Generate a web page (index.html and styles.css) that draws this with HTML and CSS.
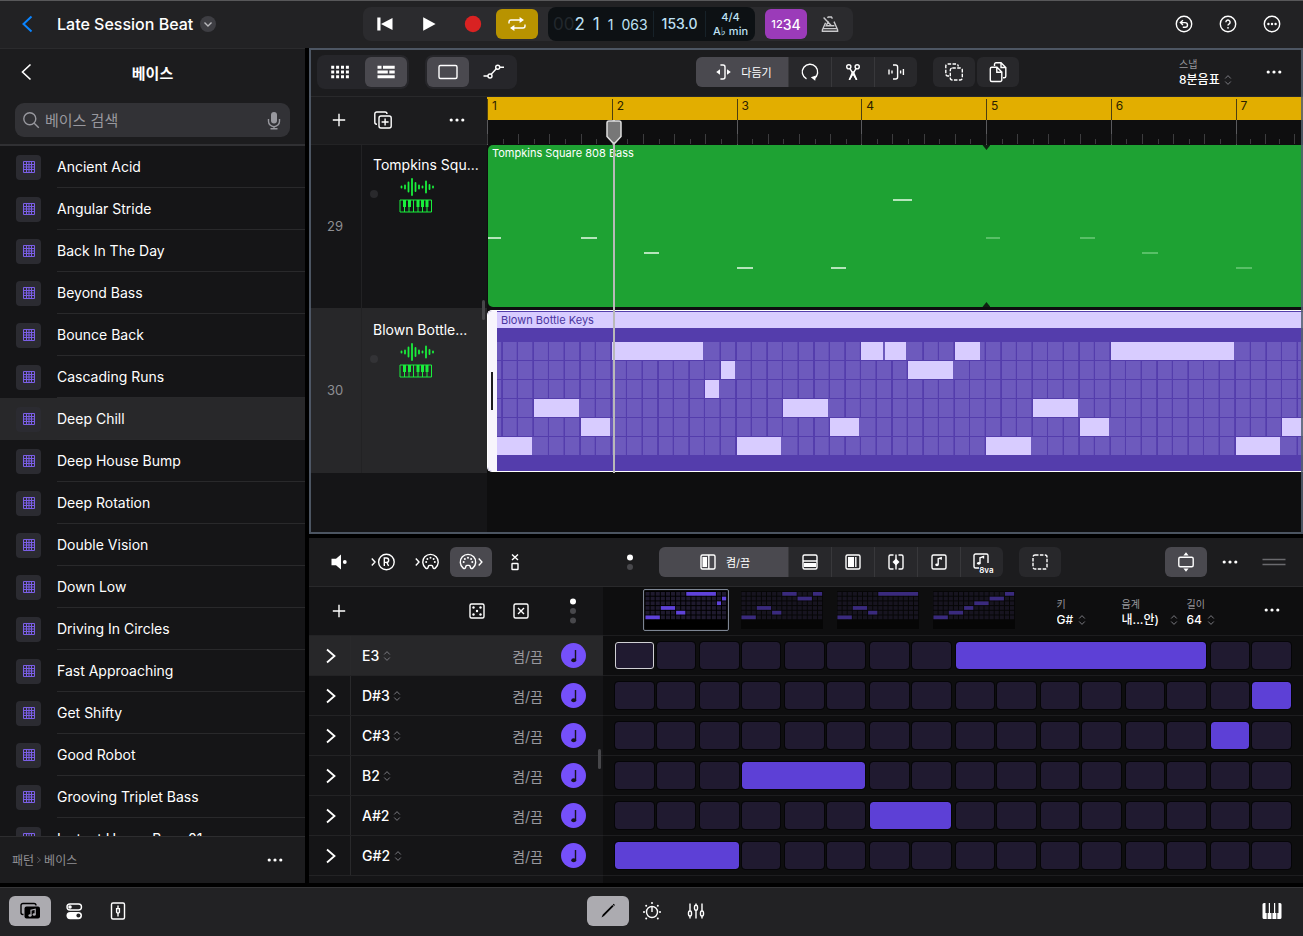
FILE: index.html
```html
<!DOCTYPE html>
<html lang="ko">
<head>
    <meta charset="UTF-8">
    <meta name="viewport" content="width=device-width, initial-scale=1.0">
    <title>Late Session Beat</title>
    <link rel="stylesheet" href="styles.css">
</head>
<body>
    <!-- icon set, all drawn on a 24px box -->
    <svg class="defs" aria-hidden="true">
        <symbol id="i-back" viewBox="0 0 24 24"><path d="M15.5 4.5L7.5 12l8 7.5"/></symbol>
        <symbol id="i-next" viewBox="0 0 24 24"><path d="M8 5.5l7.5 6.5L8 18.5"/></symbol>
        <symbol id="i-plus" viewBox="0 0 24 24"><path d="M12 5.8v12.4M5.8 12h12.4"/></symbol>
        <symbol id="i-dots" viewBox="0 0 24 24"><g class="fill"><circle cx="6.2" cy="12" r="1.6"/><circle cx="12" cy="12" r="1.6"/><circle cx="17.8" cy="12" r="1.6"/></g></symbol>
        <symbol id="i-updown" viewBox="0 0 8 12"><path d="M1.2 4.5L4 1.6l2.8 2.9M1.2 7.5L4 10.4l2.8-2.9"/></symbol>
        <symbol id="i-prev" viewBox="0 0 24 24"><path class="fill" d="M4.3 5.6h3.2v12.8H4.3zM19.5 5.9v12.2L8 12z"/></symbol>
        <symbol id="i-play" viewBox="0 0 24 24"><path class="fill" d="M6.2 5.2v13.6L18.6 12z"/></symbol>
        <symbol id="i-rec" viewBox="0 0 24 24"><circle class="rec" cx="12" cy="12" r="8.2"/></symbol>
        <symbol id="i-cycle" viewBox="0 0 24 24"><path d="M4 11.6V10a2 2 0 0 1 2-2h9M20 12.4V14a2 2 0 0 1-2 2H9"/><path class="fill" d="M14.6 4.9L19 8l-4.4 3.1zM9.4 12.9L5 16l4.4 3.1z"/></symbol>
        <symbol id="i-metro" viewBox="0 0 24 24"><path d="M9.6 6l.6-1h3.2l1 1.6M16 9.600l3.600 8.200v1.400H4.400v-1.400l3.200-7M4.600 16.600h14.800M13.400 13.800L5.600 5.400M10.400 9.200l-2.200 4.600h8.200"/></symbol>
        <symbol id="i-undo" viewBox="0 0 24 24"><circle cx="12" cy="12" r="7.7"/><path d="M11 8.200L8.400 10.600 11 13M8.600 10.600h4.600a2.300 2.300 0 0 1 0 4.600h-2.400"/></symbol>
        <symbol id="i-help" viewBox="0 0 24 24"><circle cx="12" cy="12" r="7.7"/><path d="M9.9 10.200a2.100 2.100 0 1 1 3.300 1.700c-.8.5-1.200.8-1.200 1.700"/><circle class="fill" cx="12" cy="15.8" r=".9"/></symbol>
        <symbol id="i-more" viewBox="0 0 24 24"><circle cx="12" cy="12" r="7.7"/><g class="fill"><circle cx="8.400" cy="12" r="1.200"/><circle cx="12" cy="12" r="1.200"/><circle cx="15.600" cy="12" r="1.200"/></g></symbol>
        <symbol id="i-search" viewBox="0 0 24 24"><circle cx="10.8" cy="10.8" r="6"/><path d="M15.2 15.2l4.600 4.600"/></symbol>
        <symbol id="i-mic" viewBox="0 0 24 24"><rect class="fill" x="9" y="4" width="6" height="11.5" rx="3"/><path d="M6.500 11v2.200a5.500 5.500 0 0 0 11 0V11M12 18.700v2M8.500 20.700h7"/></symbol>
        <symbol id="i-grid" viewBox="0 0 24 24"><path class="dash" d="M3.200 7.200h18M3.200 12h18M3.200 16.800h18"/></symbol>
        <symbol id="i-rows" viewBox="0 0 24 24"><path class="bars" d="M3.500 7.300h4M9 7.300h11.700M3.500 12h10.300M15.300 12h5.400M3.500 16.700h17.200"/></symbol>
        <symbol id="i-rect" viewBox="0 0 24 24"><rect x="3" y="5.500" width="18" height="13" rx="1.500"/></symbol>
        <symbol id="i-auto" viewBox="0 0 24 24"><path d="M1.500 16h4.500M9 14.500l5.500-6M17.600 7.200h4.400"/><circle cx="8" cy="16" r="2"/><circle cx="15.700" cy="7.200" r="2"/></symbol>
        <symbol id="i-trim" viewBox="0 0 24 24"><path d="M9.400 5H12a2 2 0 0 1 2 2v10a2 2 0 0 1-2 2H9.400"/><path class="fill" d="M9 9.300v5.400L5.200 12zM16 9.300v5.400l3.800-2.700z"/></symbol>
        <symbol id="i-loop" viewBox="0 0 24 24"><path d="M8.500 18.800a7.700 7.700 0 1 1 7.500-.300"/><path class="fill" d="M12.800 17.200l5.200-1.800-.800 5.400z"/></symbol>
        <symbol id="i-cut" viewBox="0 0 24 24"><circle cx="7.800" cy="6.800" r="2.100"/><circle cx="16.200" cy="6.800" r="2.100"/><path d="M9 8.600l6.600 11M15 8.600l-6.600 11"/><path class="fill" d="M11 12.500l3.800 7.500h1.600l-3.600-9zM13 12.500L9.200 20H7.600l3.600-9z"/></symbol>
        <symbol id="i-stretch" viewBox="0 0 24 24"><path d="M9 5h2.600a2 2 0 0 1 2 2v10a2 2 0 0 1-2 2H9M5 9.500v5M8 10.500v3M16.600 10.500v3M19.400 9v6"/></symbol>
        <symbol id="i-multi" viewBox="0 0 24 24"><path class="dashed" d="M7 16H5.800a2 2 0 0 1-2-2V6a2 2 0 0 1 2-2h8.400a2 2 0 0 1 2 2v.500"/><rect class="dashed" x="8.300" y="8" width="12" height="12" rx="2"/></symbol>
        <symbol id="i-copy" viewBox="0 0 24 24"><path d="M8.500 6V4.200A1.500 1.500 0 0 1 10 2.700h5l4.800 4.800v8.700a1.500 1.500 0 0 1-1.500 1.500H17M15 2.700v4.800h4.800"/><path d="M4.300 8.800a1.500 1.500 0 0 1 1.500-1.500H11l4.800 4.800V20a1.500 1.500 0 0 1-1.500 1.500H5.800A1.500 1.500 0 0 1 4.300 20zM10.800 7.300v5h5"/></symbol>
        <symbol id="i-dup" viewBox="0 0 24 24"><rect x="8" y="8" width="12.200" height="12" rx="2"/><path d="M6 16.200h-.200a2 2 0 0 1-2-2V6a2 2 0 0 1 2-2H14a2 2 0 0 1 2 2M14.100 10.500v7M10.600 14h7"/></symbol>
        <symbol id="i-wave" viewBox="0 0 36 18"><path d="M2.500 8.500v1M6 7.500v3M9.500 4.500v9M13 1v16M16.500 5v8M20 7.500v3M23.500 8.500v1M27 3.500v11M30.500 7v4M34 8.500v1"/></symbol>
        <symbol id="i-keys" viewBox="0 0 34 14"><path d="M1 1h31.500v12H1zM5.500 7v6M10 7v6M14.500 1v12M19 7v6M23.500 7v6M28 7v6"/><path class="fill" d="M4 1h3v7H4zM9 1h3v7H9zM17.500 1h3v7h-3zM22 1h3v7h-3zM26.500 1h3v7h-3z"/></symbol>
        <symbol id="i-mute" viewBox="0 0 24 24"><path class="fill" d="M4.500 8.800H9l5-4.300v15l-5-4.300H4.500z"/><circle class="fill" cx="17.800" cy="12" r="1.900"/></symbol>
        <symbol id="i-rin" viewBox="0 0 24 24"><path d="M.800 8.500L4 12 .800 15.500M13.300 16V8h2.200a2.200 2.200 0 0 1 0 4.400h-2.200M15.800 12.400l1.800 3.600"/><circle cx="15.400" cy="12" r="7.800"/></symbol>
        <symbol id="i-midi" viewBox="0 0 18 18"><path d="M4.200 15.100a7.700 7.700 0 1 1 9.600 0c-1 .800-2 .500-2.300-.500l-.400-1.300a1.300 1.300 0 0 0-1.200-.900H8.100a1.300 1.300 0 0 0-1.200.900l-.400 1.300c-.300 1-1.300 1.300-2.300.5z"/><g class="fill"><circle cx="4.700" cy="9" r="1"/><circle cx="5.900" cy="6" r="1"/><circle cx="9" cy="4.700" r="1"/><circle cx="12.100" cy="6" r="1"/><circle cx="13.300" cy="9" r="1"/></g></symbol>
        <symbol id="i-midi-in" viewBox="0 0 24 24"><path d="M.800 8.500L4 12 .800 15.500"/><use href="#i-midi" x="6.500" y="3" width="18" height="18"/></symbol>
        <symbol id="i-midi-out" viewBox="0 0 24 24"><path d="M19.700 8.500l3.200 3.500-3.200 3.500"/><use href="#i-midi" x="0" y="3" width="18" height="18"/></symbol>
        <symbol id="i-xbox" viewBox="0 0 24 24"><path d="M9 4.500l6 5.500M15 4.500L9 10"/><rect x="9" y="13.500" width="6" height="6" rx=".500"/></symbol>
        <symbol id="i-two" viewBox="0 0 24 24"><circle class="fill" cx="12" cy="7.500" r="3"/><circle class="dim" cx="12" cy="17" r="3"/></symbol>
        <symbol id="i-three" viewBox="0 0 24 30"><circle class="fill" cx="12" cy="5.500" r="3"/><circle class="dim" cx="12" cy="15" r="3"/><circle class="dim" cx="12" cy="24.500" r="3"/></symbol>
        <symbol id="i-onoff" viewBox="0 0 24 24"><rect x="5" y="5" width="14" height="14" rx="1.500"/><path d="M12.800 5v14"/><rect class="fill" x="6.500" y="7" width="4.500" height="10"/></symbol>
        <symbol id="i-vel" viewBox="0 0 24 24"><rect x="5" y="5" width="14" height="14" rx="1.500"/><path d="M5 11h14"/><rect class="fill" x="6" y="13" width="12" height="4"/></symbol>
        <symbol id="i-gate" viewBox="0 0 24 24"><rect x="5" y="5" width="14" height="14" rx="1.500"/><path d="M14.800 7v10"/><rect class="fill" x="7" y="7" width="6" height="10"/></symbol>
        <symbol id="i-offset" viewBox="0 0 24 24"><path d="M9.500 5h-3A1.500 1.500 0 0 0 5 6.500v11A1.500 1.500 0 0 0 6.500 19h3M14.500 5h3A1.500 1.500 0 0 1 19 6.500v11a1.500 1.500 0 0 1-1.500 1.500h-3M12 4.500v15"/><path class="fill" d="M12 8.500l3.500 3.500-3.500 3.500L8.500 12z"/></symbol>
        <symbol id="i-notebox" viewBox="0 0 24 24"><rect x="5" y="5" width="14" height="14" rx="1.500"/><path d="M11.200 14.500V8.800l3-1v2"/><ellipse class="fill" cx="10" cy="14.800" rx="1.800" ry="1.400"/></symbol>
        <symbol id="i-octave" viewBox="0 0 24 24"><path d="M10 18H5.500A1.500 1.500 0 0 1 4 16.500v-11A1.500 1.500 0 0 1 5.500 4h11A1.500 1.500 0 0 1 18 5.500V13M10 13V7.800l3.500-1.200v2"/><ellipse class="fill" cx="8.800" cy="13.300" rx="1.800" ry="1.400"/></symbol>
        <symbol id="i-marquee" viewBox="0 0 24 24"><rect class="dashed" x="5" y="5" width="14" height="14" rx="2"/></symbol>
        <symbol id="i-height" viewBox="0 0 24 24"><rect x="4.800" y="7.300" width="14.400" height="9.400" rx="1.500"/><path class="fill" d="M12 2.200l2.600 3.300H9.400zM12 21.800l2.600-3.300H9.400z"/></symbol>
        <symbol id="i-grip" viewBox="0 0 24 24"><path d="M.500 9.500h23M.500 14.500h23"/></symbol>
        <symbol id="i-dice" viewBox="0 0 24 24"><rect x="5" y="5" width="14" height="14" rx="1.500"/><g class="fill"><circle cx="8.500" cy="8.500" r="1.200"/><circle cx="15.500" cy="8.500" r="1.200"/><circle cx="12" cy="12" r="1.200"/><circle cx="8.500" cy="15.500" r="1.200"/><circle cx="15.500" cy="15.500" r="1.200"/></g></symbol>
        <symbol id="i-clear" viewBox="0 0 24 24"><rect x="5" y="5" width="14" height="14" rx="1.500"/><path d="M9 9l6 6M15 9l-6 6"/></symbol>
        <symbol id="i-quarter" viewBox="0 0 24 24"><path d="M13.500 6v10"/><ellipse class="fill" cx="11.700" cy="16.200" rx="2.500" ry="2"/></symbol>
        <symbol id="i-pattern" viewBox="0 0 12 12"><path d="M.500.500h11v11H.500zM.500 3.500h11M.500 6h11M.500 8.500h11M3.500.500v11M6 .500v11M8.500.500v11"/></symbol>
        <symbol id="i-browser" viewBox="0 0 24 24"><path d="M5.500 15.500H5a2 2 0 0 1-2-2v-7a2 2 0 0 1 2-2h11a2 2 0 0 1 2 2"/><rect class="fill" x="6.500" y="7.500" width="15.500" height="12" rx="2"/><path class="cut" d="M13 16.500v-5.300l4.200-1v5"/><ellipse class="cutfill" cx="12" cy="16.500" rx="1.600" ry="1.200"/><ellipse class="cutfill" cx="16.200" cy="15.500" rx="1.600" ry="1.200"/></symbol>
        <symbol id="i-switch" viewBox="0 0 24 24"><rect x="5" y="5" width="14.500" height="6" rx="3"/><circle class="fill" cx="8" cy="8" r="1.800"/><rect class="fill" x="4.500" y="13" width="15.500" height="7.200" rx="3.600"/><circle class="cutdark" cx="16.400" cy="16.600" r="2"/></symbol>
        <symbol id="i-strip" viewBox="0 0 24 24"><rect x="5.500" y="4" width="13" height="16" rx="1.500"/><path d="M12 6.500v2.500M12 14.500v3M10.600 9.600h2.800v3.600L12 14.500l-1.400-1.300z"/></symbol>
        <symbol id="i-pencil" viewBox="0 0 24 24"><path class="fill" d="M5.500 18.500l1.300-3L16.300 6l1.300 1.300-9.600 9.600zM16.800 5.500l.900-.700 1.200 1.200-.800.900z"/></symbol>
        <symbol id="i-knob" viewBox="0 0 24 24"><circle cx="12" cy="13" r="5.500"/><path d="M12 8v5"/><g class="fill"><circle cx="4" cy="13" r="1"/><circle cx="20" cy="13" r="1"/><circle cx="6.200" cy="6.800" r="1"/><circle cx="17.800" cy="6.800" r="1"/><circle cx="12" cy="4" r="1"/><circle cx="6.200" cy="19.500" r="1"/><circle cx="17.800" cy="19.500" r="1"/></g></symbol>
        <symbol id="i-mixer" viewBox="0 0 24 24"><path d="M6 4.500V12M6 17v2.500M12 4.500v2M12 11v8.500M18 4.500V12M18 17v2.500"/><rect x="4.500" y="12" width="3" height="5" rx="1.500"/><rect x="10.500" y="6.300" width="3" height="5" rx="1.500"/><rect x="16.500" y="12" width="3" height="5" rx="1.500"/></symbol>
        <symbol id="i-piano" viewBox="0 0 24 24"><path class="fill" d="M2.500 5.500A1.500 1.500 0 0 1 4 4h1.500v10h1.200v6H4a1.500 1.500 0 0 1-1.500-1.500zM7.600 20v-6h1.200V4h1.200v10h1.500v6zM12.400 20v-6H14V4h1.200v10h1.200v6zM17.300 20v-6h1.200V4H20a1.500 1.500 0 0 1 1.500 1.500v13A1.500 1.500 0 0 1 20 20z"/></symbol>
    </svg>

    <div class="app">
        <header class="topbar">
            <div class="project">
                <button class="back" aria-label="뒤로"><svg><use href="#i-back"/></svg></button>
                <h1>Late Session Beat</h1>
                <button class="title-menu" aria-label="프로젝트 메뉴"><svg viewBox="0 0 16 16"><path d="M4.500 6.500L8 10l3.500-3.500"/></svg></button>
            </div>
            <div class="transport">
                <button class="btn" aria-label="처음으로"><svg><use href="#i-prev"/></svg></button>
                <button class="btn" aria-label="재생"><svg><use href="#i-play"/></svg></button>
                <button class="btn" aria-label="녹음"><svg><use href="#i-rec"/></svg></button>
                <button class="btn cycle" aria-label="사이클"><svg><use href="#i-cycle"/></svg></button>
                <div class="lcd">
                    <div class="position"><span class="big"><span class="ghost">00</span>2</span><span class="big">1</span><span>1</span><span>063</span></div>
                    <div class="tempo">153.0</div>
                    <div class="meter"><span>4/4</span><span>A♭ min</span></div>
                </div>
                <button class="btn countin" aria-label="카운트 인"><small>12</small>34</button>
                <button class="btn grey" aria-label="메트로놈"><svg><use href="#i-metro"/></svg></button>
            </div>
            <div class="tools">
                <button class="btn" aria-label="실행 취소"><svg><use href="#i-undo"/></svg></button>
                <button class="btn" aria-label="도움말"><svg><use href="#i-help"/></svg></button>
                <button class="btn" aria-label="더 보기"><svg><use href="#i-more"/></svg></button>
            </div>
        </header>

        <main class="main">
            <aside class="browser">
                <div class="browser-head">
                    <button class="btn" aria-label="뒤로"><svg><use href="#i-back"/></svg></button>
                    <h2>베이스</h2>
                </div>
                <label class="search">
                    <svg><use href="#i-search"/></svg>
                    <input type="text" placeholder="베이스 검색" aria-label="베이스 검색">
                    <svg><use href="#i-mic"/></svg>
                </label>
                <ul class="list" id="list"></ul>
                <nav class="path">
                    <a href="#">패턴</a><svg class="crumb"><use href="#i-next"/></svg><a href="#">베이스</a>
                    <button class="btn" aria-label="더 보기"><svg><use href="#i-dots"/></svg></button>
                </nav>
            </aside>

            <div class="panels">
                <section class="tracks">
                    <div class="toolbar">
                        <div class="group">
                            <button class="btn" aria-label="셀"><svg><use href="#i-grid"/></svg></button>
                            <button class="btn on" aria-label="트랙"><svg><use href="#i-rows"/></svg></button>
                        </div>
                        <div class="group">
                            <button class="btn on" aria-label="리전"><svg><use href="#i-rect"/></svg></button>
                            <button class="btn" aria-label="오토메이션"><svg><use href="#i-auto"/></svg></button>
                        </div>
                        <div class="center">
                            <div class="segments">
                                <button class="seg on trim"><svg><use href="#i-trim"/></svg>다듬기</button>
                                <button class="seg" aria-label="루프"><svg><use href="#i-loop"/></svg></button>
                                <button class="seg" aria-label="분할"><svg><use href="#i-cut"/></svg></button>
                                <button class="seg" aria-label="늘리기"><svg><use href="#i-stretch"/></svg></button>
                            </div>
                            <div class="pair">
                                <button class="btn box" aria-label="다중 선택"><svg><use href="#i-multi"/></svg></button>
                                <button class="btn box" aria-label="복사"><svg><use href="#i-copy"/></svg></button>
                            </div>
                        </div>
                        <div class="end">
                            <label class="field snap"><span>스냅</span><span class="pick"><select><option>8분음표</option></select><svg class="updown"><use href="#i-updown"/></svg></span></label>
                            <button class="btn" aria-label="더 보기"><svg><use href="#i-dots"/></svg></button>
                        </div>
                    </div>
                    <div class="arrange">
                        <div class="headers">
                            <div class="header-tools">
                                <button class="btn" aria-label="트랙 추가"><svg><use href="#i-plus"/></svg></button>
                                <button class="btn" aria-label="트랙 복제"><svg><use href="#i-dup"/></svg></button>
                                <button class="btn last" aria-label="더 보기"><svg><use href="#i-dots"/></svg></button>
                            </div>
                            <div class="track">
                                <div class="number">29</div>
                                <div class="info">
                                    <h3>Tompkins Squ...</h3>
                                    <div class="kind"><svg class="wave"><use href="#i-wave"/></svg><svg class="keys"><use href="#i-keys"/></svg></div>
                                </div>
                            </div>
                            <div class="track selected">
                                <div class="number">30</div>
                                <div class="info">
                                    <h3>Blown Bottle...</h3>
                                    <div class="kind"><svg class="wave"><use href="#i-wave"/></svg><svg class="keys"><use href="#i-keys"/></svg></div>
                                </div>
                            </div>
                            <i class="thumb"></i>
                        </div>
                        <div class="timeline">
                            <div class="ruler" id="ruler"></div>
                            <div class="lane"><div class="region green" id="green"><span class="name">Tompkins Square 808 Bass</span></div></div>
                            <div class="lane">
                                <div class="region purple">
                                    <span class="name">Blown Bottle Keys</span>
                                    <div class="roll" id="roll"></div>
                                </div>
                            </div>
                            <div class="playhead"><svg viewBox="0 0 16 24"><path d="M1 3a2 2 0 0 1 2-2h10a2 2 0 0 1 2 2v13.500l-6 6.500H7l-6-6.500z"/></svg></div>
                        </div>
                    </div>
                </section>

                <section class="editor">
                    <div class="toolbar">
                        <div class="loose">
                            <button class="btn" aria-label="소리 끔"><svg><use href="#i-mute"/></svg></button>
                            <button class="btn" aria-label="녹음 입력"><svg><use href="#i-rin"/></svg></button>
                            <button class="btn" aria-label="MIDI 입력"><svg><use href="#i-midi-in"/></svg></button>
                            <button class="btn on" aria-label="MIDI 출력"><svg><use href="#i-midi-out"/></svg></button>
                            <button class="btn" aria-label="자르기"><svg><use href="#i-xbox"/></svg></button>
                        </div>
                        <div class="center">
                            <button class="btn page" aria-label="페이지"><svg><use href="#i-two"/></svg></button>
                            <div class="segments">
                                <button class="seg on wide"><svg><use href="#i-onoff"/></svg>켬/끔</button>
                                <button class="seg" aria-label="벨로시티"><svg><use href="#i-vel"/></svg></button>
                                <button class="seg" aria-label="게이트"><svg><use href="#i-gate"/></svg></button>
                                <button class="seg" aria-label="오프셋"><svg><use href="#i-offset"/></svg></button>
                                <button class="seg" aria-label="음표"><svg><use href="#i-notebox"/></svg></button>
                                <button class="seg octave"><svg><use href="#i-octave"/></svg><span>8va</span></button>
                            </div>
                            <button class="btn box" aria-label="선택"><svg><use href="#i-marquee"/></svg></button>
                        </div>
                        <div class="end">
                            <button class="btn on" aria-label="높이"><svg><use href="#i-height"/></svg></button>
                            <button class="btn" aria-label="더 보기"><svg><use href="#i-dots"/></svg></button>
                            <button class="btn grip" aria-label="크기 조절"><svg><use href="#i-grip"/></svg></button>
                        </div>
                    </div>
                    <div class="sequencer">
                        <div class="seq-rows">
                            <div class="seq-tools">
                                <button class="btn" aria-label="행 추가"><svg><use href="#i-plus"/></svg></button>
                                <button class="btn last" aria-label="무작위"><svg><use href="#i-dice"/></svg></button>
                                <button class="btn" aria-label="지우기"><svg><use href="#i-clear"/></svg></button>
                                <button class="btn pager" aria-label="페이지"><svg><use href="#i-three"/></svg></button>
                            </div>
                            <div id="labels"></div>
                            <i class="thumb"></i>
                        </div>
                        <div class="seq-grid">
                            <div class="seq-head">
                                <div class="thumbs" id="thumbs"></div>
                                <div class="fields">
                                    <label class="field"><span>키</span><span class="pick"><select><option>G#</option></select><svg class="updown"><use href="#i-updown"/></svg></span></label>
                                    <label class="field scale"><span>음계</span><span class="pick"><select><option>내...안)</option></select><svg class="updown"><use href="#i-updown"/></svg></span></label>
                                    <label class="field"><span>길이</span><span class="pick"><select><option>64</option></select><svg class="updown"><use href="#i-updown"/></svg></span></label>
                                </div>
                                <button class="btn" aria-label="더 보기"><svg><use href="#i-dots"/></svg></button>
                            </div>
                            <div id="steps"></div>
                        </div>
                    </div>
                </section>
            </div>
        </main>

        <footer class="bottombar">
            <div class="side">
                <button class="btn lit" aria-label="브라우저"><svg><use href="#i-browser"/></svg></button>
                <button class="btn" aria-label="인스펙터"><svg><use href="#i-switch"/></svg></button>
                <button class="btn" aria-label="페이더"><svg><use href="#i-strip"/></svg></button>
            </div>
            <div class="mid">
                <button class="btn lit" aria-label="편집"><svg><use href="#i-pencil"/></svg></button>
                <button class="btn" aria-label="플러그인"><svg><use href="#i-knob"/></svg></button>
                <button class="btn" aria-label="믹서"><svg><use href="#i-mixer"/></svg></button>
            </div>
            <div class="side right">
                <button class="btn" aria-label="건반"><svg><use href="#i-piano"/></svg></button>
            </div>
        </footer>
    </div>
    <script src="script.js"></script>
</body>
</html>
```

FILE: styles.css
```css
* {
    box-sizing: border-box;
}
body {
    margin: 0;
    background: #000;
    color: #fff;
    font-family: Inter, "DejaVu Sans", "Noto Sans CJK KR", sans-serif;
    font-size: 14px;
}
h1, h2, h3, ul {
    margin: 0;
    padding: 0;
    font-weight: 400;
}
button, input, select {
    font: inherit;
    color: inherit;
    border: 0;
    padding: 0;
    margin: 0;
    background: none;
    appearance: none;
}
a {
    color: inherit;
    text-decoration: none;
}
svg {
    width: 24px;
    height: 24px;
    flex: none;
    display: block;
    fill: none;
    stroke: currentColor;
    stroke-width: 1.4;
    overflow: visible;
}
.defs {
    position: absolute;
    width: 0;
    height: 0;
}
.fill { fill: currentColor; stroke: none; }
.rec { fill: #d92222; stroke: none; }
.dim { fill: #48484c; stroke: none; }
.dash { stroke-width: 3; stroke-dasharray: 3 1.9; }
.bars { stroke-width: 3; }
.dashed { stroke-dasharray: 3.5 1.4; }
.cut { stroke: #b0afb4; stroke-width: 1.2; }
.cutfill { fill: #b0afb4; stroke: none; }
.cutdark { fill: #222224; stroke: none; }

.app {
    height: 100vh;
    display: flex;
    flex-direction: column;
}

/* shared controls */
.btn {
    width: 42px;
    height: 30px;
    flex: none;
    display: flex;
    align-items: center;
    justify-content: center;
    border-radius: 6px;
}
.btn.on, .seg.on {
    background: #4a494f;
}
.btn.box {
    background: #28282b;
}
.btn.lit {
    background: #acabb0;
    color: #000;
}
.group {
    display: flex;
    gap: 4px;
    padding: 2px;
    border-radius: 8px;
    background: #26262a;
}
.segments {
    display: flex;
    border-radius: 6px;
    overflow: hidden;
    background: #28282b;
}
.seg {
    width: 43px;
    height: 30px;
    display: flex;
    align-items: center;
    justify-content: center;
    gap: 6px;
    font-size: 11px;
    border-left: 1px solid #38383b;
}
.seg.on {
    border-left: 0;
}
.seg.trim { width: 92px; }
.seg.wide { width: 129px; }
.seg.octave {
    position: relative;
}
.octave span {
    position: absolute;
    right: 9px;
    bottom: 2px;
    font-size: 8px;
    line-height: 10px;
    font-weight: 600;
    background: #28282b;
}
.field {
    display: block;
    font-size: 10px;
    line-height: 16px;
    color: #98989d;
}
.field > span {
    display: block;
}
.field .pick {
    display: flex;
    align-items: center;
    gap: 4px;
    font-size: 12px;
    font-weight: 500;
    color: #fff;
}
.updown {
    width: 8px;
    height: 12px;
    color: #7a7a80;
    stroke-width: 1;
}
.thumb {
    position: absolute;
    right: 2px;
    width: 3px;
    height: 20px;
    border-radius: 2px;
    background: #47474a;
}

/* top bar */
.topbar {
    display: flex;
    align-items: center;
    flex: none;
    height: 48px;
    box-shadow: inset 0 1px #58585a;
    background: #222224;
}
.project {
    width: 363px;
    display: flex;
    align-items: center;
    padding-left: 16px;
}
.back {
    color: #0a84ff;
    margin-right: 17px;
}
.back svg {
    stroke-width: 2;
}
.project h1 {
    font-size: 16px;
    font-weight: 500;
}
.title-menu {
    margin-left: 7px;
    border-radius: 50%;
    background: #3e3e43;
    color: #b8b8bc;
}
.title-menu svg {
    width: 16px;
    height: 16px;
}
.transport {
    display: flex;
    align-items: center;
    gap: 2px;
    height: 34px;
    padding: 0 2px 0 1px;
    border-radius: 8px;
    background: #2b2b2e;
}
.btn.cycle {
    background: #b89300;
}
.btn.countin {
    background: #9b3bb9;
    font-size: 14px;
    font-weight: 500;
}
.countin small {
    font-size: 11px;
}
.grey {
    color: #c9c9cc;
}
.lcd {
    display: flex;
    align-items: center;
    width: 207px;
    height: 34px;
    margin: 0 8px;
    border-radius: 8px;
    background: #0d1114;
    color: #bfe1f5;
}
.lcd > div + div {
    border-left: 1px solid #172229;
    height: 26px;
}
.position {
    width: 105px;
    display: flex;
    align-items: center;
    gap: 8px;
    padding-left: 5px;
    font-size: 14px;
}
.position .big {
    font-size: 17px;
}
.ghost {
    color: #22282d;
}
.tempo {
    width: 52px;
    line-height: 26px;
    text-align: center;
    font-size: 14px;
    font-weight: 500;
}
.meter {
    flex: 1;
    display: flex;
    flex-direction: column;
    align-items: center;
    justify-content: center;
    font-size: 11px;
    line-height: 14px;
    font-weight: 500;
}
.tools {
    display: flex;
    gap: 2px;
    margin-left: auto;
    padding-right: 10px;
}

/* browser */
.main {
    flex: 1;
    min-height: 0;
    display: flex;
    gap: 4px;
    padding-bottom: 4px;
}
.browser {
    width: 305px;
    flex: none;
    display: flex;
    flex-direction: column;
    background: #1c1c1e;
}
.browser-head {
    position: relative;
    display: flex;
    align-items: center;
    height: 48px;
    padding-left: 6px;
    box-shadow: inset 0 1px #2b2b2d;
}
.browser-head h2 {
    position: absolute;
    left: 0;
    right: 0;
    text-align: center;
    font-size: 15px;
    font-weight: 600;
    pointer-events: none;
}
.browser-head svg {
    stroke-width: 1.6;
}
.search {
    display: flex;
    align-items: center;
    height: 34px;
    margin: 7px 15px;
    padding: 0 4px;
    border-radius: 9px;
    background: #323236;
    color: #98989e;
}
.search input {
    flex: 1;
    min-width: 0;
    padding-left: 2px;
    outline: 0;
    font-size: 15px;
}
.search input::placeholder {
    color: #98989e;
}
.list {
    flex: 1;
    min-height: 0;
    overflow: hidden;
    list-style: none;
    border-top: 2px solid #303033;
    background: #151517;
}
.list li {
    display: flex;
    align-items: center;
    height: 42px;
    padding-left: 16px;
    gap: 16px;
}
.list li.current {
    background: #28282a;
}
.list .tile {
    width: 25px;
    height: 25px;
    flex: none;
    display: grid;
    place-items: center;
    border-radius: 4px;
    background: #2b2b31;
    color: #7b5fe6;
}
.tile svg {
    width: 12px;
    height: 12px;
    stroke-width: 1;
}
.list button {
    flex: 1;
    height: 42px;
    text-align: left;
    border-bottom: 1px solid #29292b;
}
.path {
    display: flex;
    align-items: center;
    height: 47px;
    padding: 0 9px 0 12px;
    box-shadow: inset 0 1px #2d2d2f;
    font-size: 12px;
    color: #8f8f94;
}
.path .btn {
    margin-left: auto;
    color: #fff;
}
.path .crumb {
    width: 10px;
    height: 10px;
}

/* tracks */
.panels {
    flex: 1;
    min-width: 0;
    display: flex;
    flex-direction: column;
    gap: 4px;
}
.tracks {
    position: relative;
    flex: 1;
    min-height: 0;
    display: flex;
    flex-direction: column;
    background: #0e0e0f;
}
.tracks::after {
    content: "";
    position: absolute;
    inset: 0;
    border: 2px solid #566070;
    opacity: .85;
    pointer-events: none;
}
.toolbar {
    display: flex;
    align-items: center;
    flex: none;
    height: 49px;
    padding: 0 8px;
    border-bottom: 1px solid #29292b;
    background: #1c1c1e;
}
.toolbar .group + .group {
    margin-left: 16px;
}
.toolbar .center {
    display: flex;
    align-items: center;
    gap: 16px;
    margin: 0 auto;
}
.tracks .center {
    padding-left: 18px;
}
.editor .center {
    padding-right: 32px;
}
.pair {
    display: flex;
    gap: 2px;
}
.end {
    display: flex;
    align-items: center;
    gap: 2px;
}
.snap {
    width: 72px;
}
.arrange {
    flex: 1;
    min-height: 0;
    display: flex;
}
.headers {
    position: relative;
    width: 178px;
    flex: none;
    background: #151517;
}
.headers .thumb {
    top: 203px;
}
.header-tools {
    display: flex;
    align-items: center;
    gap: 2px;
    height: 48px;
    padding: 0 9px 1px;
    border-bottom: 1px solid #232325;
    background: #1c1c1e;
}
.last {
    margin-left: auto;
}
.track {
    display: flex;
    height: 163px;
}
.track.selected {
    height: 165px;
    background: #272729;
}
.number {
    width: 53px;
    display: grid;
    place-items: center;
    padding-bottom: 1px;
    border-right: 1px solid #222224;
    color: #8e8e93;
    font-size: 13px;
}
.track .info {
    flex: 1;
    padding: 11px 0 0 11px;
}
.track.selected .info {
    padding-top: 13px;
}
.info h3 {
    font-size: 14px;
    line-height: 18px;
    white-space: nowrap;
}
.kind {
    position: relative;
    display: grid;
    gap: 3px;
    padding: 4px 0 0 26px;
    color: #19f03c;
}
.kind::before {
    content: "";
    position: absolute;
    left: -3px;
    top: 16px;
    width: 8px;
    height: 8px;
    border-radius: 50%;
    background: #29292c;
}
.wave {
    width: 36px;
    height: 18px;
    stroke-width: 1.8;
    stroke-linecap: round;
}
.keys {
    width: 34px;
    height: 14px;
    stroke-width: 1;
}
.selected .kind::before {
    background: #333336;
}

/* timeline, --steps is how many steps fit in view */
.timeline {
    --steps: 52.32;
    --step: calc(100% / var(--steps));
    position: relative;
    flex: 1;
    min-width: 0;
    overflow: hidden;
}
.ruler {
    display: grid;
    grid-template-columns: repeat(6, minmax(0, 100fr)) minmax(0, 54fr);
    height: 48px;
    overflow: hidden;
    background: linear-gradient(#e2ae00 23px, #0e0e0f 23px);
}
.bar {
    display: flex;
    flex-direction: column;
    border-left: 1px solid #48484a;
    border-image: linear-gradient(#e2ae00 3px, #4d3f10 3px 23px, #5a5a5d 23px) 1;
    color: #2a2100;
    font-size: 12px;
    line-height: 17px;
    padding-left: 4px;
}
.ticks {
    display: flex;
    align-items: flex-end;
    margin: auto 0 1px -5px;
}
.ticks i {
    flex: 1 0 0;
    height: 5px;
    border-left: 1px solid #3c3c3e;
}
.ticks i:nth-child(odd) {
    height: 10px;
}
.bar:last-child .ticks {
    width: 186%;
}
.lane {
    height: 163px;
}
.lane + .lane {
    height: 165px;
}
.region {
    position: relative;
    height: 162px;
    overflow: hidden;
    border-radius: 5px 0 0 5px;
}
.region .name {
    display: block;
    font-size: 11px;
    line-height: 16px;
    padding: 0 4px;
}
.green {
    background: #1ea233;
    margin-left: 1px;
}
.hit {
    position: absolute;
    height: 2px;
    background: #b5e5bb;
}
.hit.repeat {
    background: #58c067;
}
.notch {
    position: absolute;
    top: 0;
    width: 8px;
    height: 5px;
    margin-left: -4px;
    background: #0e2212;
    clip-path: polygon(0 0, 100% 0, 50% 100%);
}
.notch.low {
    top: auto;
    bottom: 0;
    transform: scaleY(-1);
}
.purple {
    top: 2px;
    background: #543dac;
    border: 1px solid #fff;
    border-width: 1px 0 1px 1px;
}
.purple .name {
    margin: 1px 0 0 9px;
    background: #d8ccff;
    color: #4a35a0;
}
.purple::before {
    content: "";
    position: absolute;
    z-index: 1;
    left: 0;
    top: 0;
    bottom: 0;
    width: 9px;
    background: #f7f5fc;
}
.purple::after {
    content: "";
    position: absolute;
    z-index: 2;
    left: 3px;
    top: 61px;
    width: 2px;
    height: 38px;
    background: #1c1c1e;
}
.roll {
    display: grid;
    gap: 1px;
    margin: 14px 0 0 -1px;
}
.roll-row {
    position: relative;
    height: 18px;
    background: repeating-linear-gradient(to right, #6d5abd 0 calc(var(--step) - 2px), #543dac calc(var(--step) - 1px) var(--step));
}
.roll-row i {
    position: absolute;
    top: 0;
    bottom: 0;
    background: #d8ccff;
    border-right: 2px solid #6d5abd;
}
.playhead {
    position: absolute;
    left: calc(var(--step) * 8.1);
    top: 23px;
    height: 353px;
    border-left: 2px solid #b9b9b9;
}
.playhead svg {
    width: 16px;
    height: 24px;
    margin-left: -9px;
    fill: #777;
    stroke: #dedede;
    stroke-width: 1.5;
}

/* step sequencer */
.editor {
    height: 345px;
    flex: none;
    display: flex;
    flex-direction: column;
}
.loose {
    display: flex;
    gap: 2px;
    padding-left: 1px;
}
.page {
    margin-right: -8px;
}
.grip {
    color: #6a6a6e;
}
.sequencer {
    flex: 1;
    display: flex;
}
.seq-rows {
    position: relative;
    width: 294px;
    flex: none;
    background: #151517;
}
.seq-rows .thumb {
    top: 162px;
}
.seq-tools {
    display: flex;
    align-items: center;
    gap: 2px;
    height: 49px;
    padding: 0 9px;
    border-bottom: 1px solid #232325;
}
.pager {
    margin-left: 8px;
}
.pager svg {
    height: 30px;
}
.label-row {
    display: flex;
    align-items: center;
    height: 40px;
    border-bottom: 1px solid #232325;
}
.label-row.selected {
    background: #272729;
}
.label-row .open {
    width: 42px;
    height: 39px;
    display: grid;
    place-items: center;
    padding-left: 3px;
    border-right: 1px solid #29292b;
}
.open svg {
    stroke-width: 1.8;
}
.label-row .pick {
    flex: 1;
    display: flex;
    align-items: center;
    gap: 3px;
    padding-left: 11px;
    font-weight: 500;
}
.label-row .mode {
    font-size: 14px;
    color: #98989d;
}
.label-row .note {
    width: 25px;
    height: 25px;
    display: grid;
    place-items: center;
    margin: 0 17px 0 18px;
    border-radius: 50%;
    background: #7550fb;
    color: #17131f;
}
.seq-grid {
    flex: 1;
    min-width: 0;
    background: #0e0e0f;
}
.seq-head {
    display: flex;
    align-items: center;
    height: 49px;
    padding: 0 10px 2px 40px;
    border-bottom: 1px solid #1d1d1f;
}
.thumbs {
    display: flex;
    gap: 10px;
}
.thumbs button {
    padding: 1px;
    border: 1px solid transparent;
    border-radius: 2px;
    opacity: .55;
}
.thumbs button.on {
    border-color: #7d8593;
    opacity: 1;
}
.thumbs svg {
    width: 82px;
    height: 38px;
    background: #000;
    stroke: none;
}
.fields {
    display: flex;
    margin: 3px auto 0;
    padding-left: 11px;
}
.fields .field {
    width: 65px;
}
.fields .field:last-child {
    width: 36px;
}
.fields .scale .pick {
    gap: 10px;
}
.step-row {
    display: grid;
    grid-template-columns: repeat(8, 1fr 3px 1fr 5px);
    height: 40px;
    padding: 6px 7px 6px 12px;
    border-bottom: 1px solid #1d1d1f;
}
.step {
    border-radius: 3px;
    background: #201a30;
    outline: 1px solid #050507;
}
.step.on {
    background: #5d40d6;
}
.step.focus {
    outline: 0;
    border: 1px solid #d0d0d4;
}

/* bottom bar */
.bottombar {
    display: flex;
    align-items: center;
    flex: none;
    height: 49px;
    padding: 0 10px 1px 9px;
    box-shadow: inset 0 1px #363638;
    background: #222224;
}
.side {
    flex: 1;
    display: flex;
    gap: 2px;
}
.mid {
    display: flex;
    gap: 2px;
    padding-left: 2px;
}
.side.right {
    justify-content: flex-end;
}
.mid {
    margin-left: -1px;
}
```

FILE: script.js
```javascript
const icon = (name) => `<svg><use href="#i-${name}"/></svg>`;

const presets = ['Ancient Acid', 'Angular Stride', 'Back In The Day', 'Beyond Bass', 'Bounce Back',
    'Cascading Runs', 'Deep Chill', 'Deep House Bump', 'Deep Rotation', 'Double Vision', 'Down Low',
    'Driving In Circles', 'Fast Approaching', 'Get Shifty', 'Good Robot', 'Grooving Triplet Bass',
    'Instant House Bass 01'];

document.getElementById('list').innerHTML = presets.map(name =>
    `<li class="${name === 'Deep Chill' ? 'current' : ''}"><span class="tile">${icon('pattern')}</span><button>${name}</button></li>`
).join('');

// ruler
document.getElementById('ruler').innerHTML = [1, 2, 3, 4, 5, 6, 7].map(n =>
    `<div class="bar">${n}<div class="ticks">${'<i></i>'.repeat(8)}</div></div>`
).join('');

// bass region: [start step, length in steps, top]
const STEPS = 52.32;
const pct = (n) => (n / STEPS * 100).toFixed(3) + '%';
const hits = [[0, .85, 92], [6, 1, 92], [10, 1, 107], [16, 1, 122], [22, 1, 122], [26, 1.2, 54],
    [32, .9, 92], [38, 1, 92], [42, 1, 107], [48, 1.05, 122]];
document.getElementById('green').insertAdjacentHTML('beforeend', hits.map(([at, len, top]) =>
    `<i class="hit ${at >= 32 ? 'repeat' : ''}" style="left:${pct(at)};width:${pct(len)};top:${top}px"></i>`
).join('') + `<i class="notch" style="left:${pct(32)}"></i><i class="notch low" style="left:${pct(32)}"></i>`);

// keys region, one list of [start, length] per row
const keys = [
    [[8, 6], [24, 1.5], [25.5, 1.5], [30, 1.75], [40, 8]],
    [[15, 1], [27, 3]],
    [[14, 1]],
    [[3, 3], [19, 3], [35, 3]],
    [[6, 2], [22, 2], [38, 2], [51, 2]],
    [[0, 3], [16, 3], [32, 3], [48, 3]]
];
document.getElementById('roll').innerHTML = keys.map(row =>
    `<div class="roll-row">${row.map(([at, len]) => `<i style="left:${pct(at)};width:${pct(len)}"></i>`).join('')}</div>`
).join('');

// sequencer rows
const rows = [['E3', 8, 6], ['D#3', 15, 1], ['C#3', 14, 1], ['B2', 3, 3], ['A#2', 6, 2], ['G#2', 0, 3]];
document.getElementById('labels').innerHTML = rows.map(([note], i) =>
    `<div class="label-row ${i === 0 ? 'selected' : ''}">
        <button class="open" aria-label="열기">${icon('next')}</button>
        <label class="pick"><select aria-label="음"><option>${note}</option></select><svg class="updown"><use href="#i-updown"/></svg></label>
        <span class="mode">켬/끔</span>
        <button class="note" aria-label="음표">${icon('quarter')}</button>
    </div>`
).join('');

document.getElementById('steps').innerHTML = rows.map(([, start, len], r) => {
    let cells = '';
    for (let i = 0; i < 16; i++) {
        if (i > start && i < start + len) continue;
        const on = i === start;
        const cls = on ? 'on' : (r === 0 && i === 0 ? 'focus' : '');
        cells += `<button class="step ${cls}" aria-label="${i + 1}" style="grid-column:${2 * i + 1} / span ${on ? 2 * len - 1 : 1}"></button>`;
    }
    return `<div class="step-row">${cells}</div>`;
}).join('');

// pattern thumbnails: [row, start, length]
const patterns = [
    [[5, 0, 3], [3, 3, 3], [4, 6, 2], [0, 8, 6], [2, 14, 1], [1, 15, 1]],
    [[5, 0, 3], [3, 3, 3], [4, 6, 2], [0, 8, 3], [1, 11, 3], [0, 14, 2]],
    [[5, 0, 3], [3, 3, 3], [4, 6, 2], [0, 8, 8]],
    [[5, 0, 3], [4, 3, 3], [3, 6, 2], [2, 8, 3], [1, 11, 3], [0, 14, 2]]
];
const cell = (row, at, len, color) =>
    `<rect x="${at * 5.1 + .5}" y="${row * 4.7 + 1}" width="${len * 5.1 - 1}" height="3.7" fill="${color}"/>`;
document.getElementById('thumbs').innerHTML = patterns.map((notes, i) => {
    let out = '';
    for (let r = 0; r < 6; r++) for (let c = 0; c < 16; c++) out += cell(r, c, 1, '#1f1a2e');
    out += notes.map(([r, at, len]) => cell(r, at, len, '#5f42da')).join('');
    return `<button class="${i === 0 ? 'on' : ''}" aria-label="패턴 ${i + 1}"><svg viewBox="0 0 82 38">${out}</svg></button>`;
}).join('');
```
